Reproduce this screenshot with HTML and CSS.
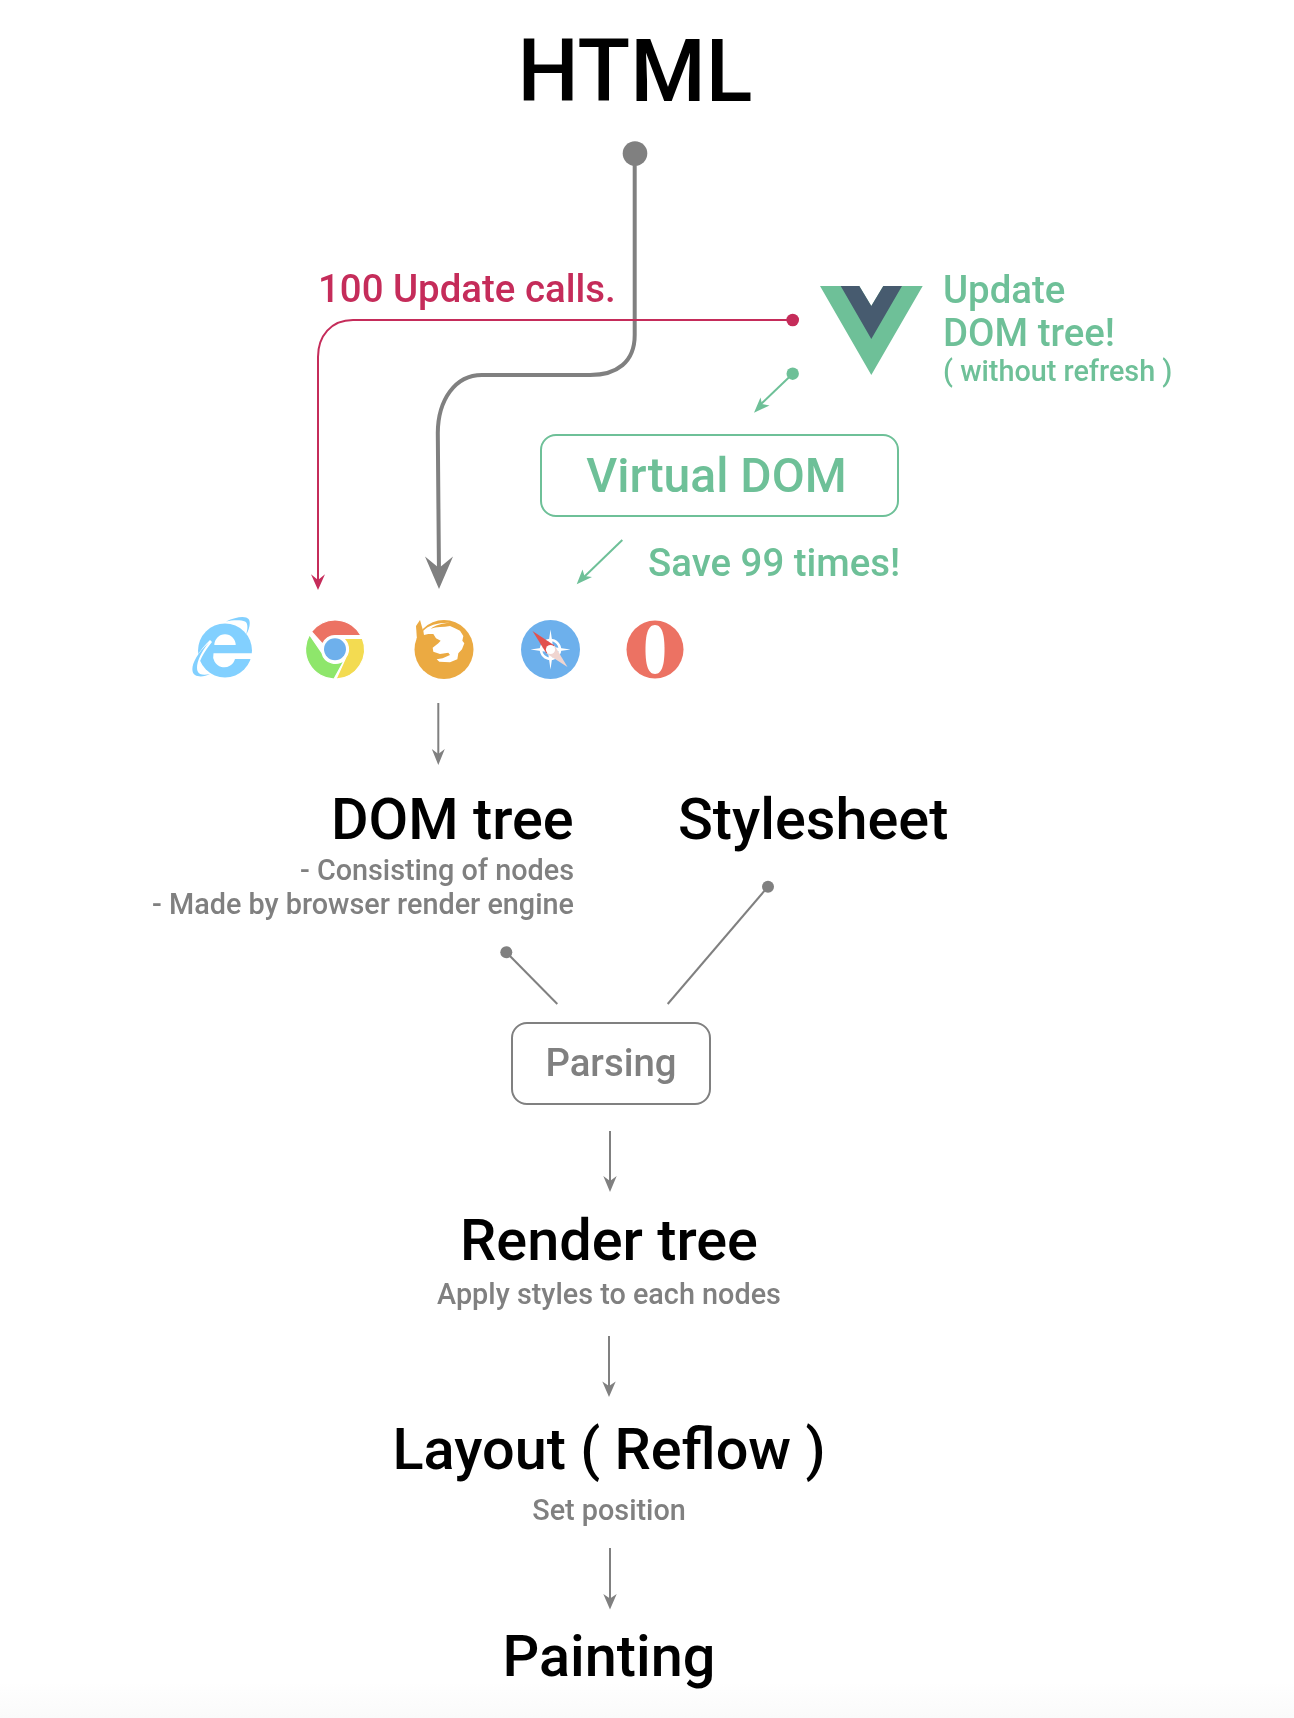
FILE: index.html
```html
<!DOCTYPE html>
<html>
<head>
  <title>Browser rendering flow</title>
  <meta charset="utf-8">
  <link rel="stylesheet" href="styles.css">
</head>
<body>
  <div class="canvas">
    <svg class="wires" width="1294" height="1718" viewBox="0 0 1294 1718">
      <!-- html to dom tree -->
      <g class="wire-gray">
        <circle cx="635" cy="153.5" r="12.3"/>
        <path class="w4" d="M634.7 153 V335 C634.7 362 617 375 590 375 H482 C455 375 438 400 437.8 433 L439 575"/>
        <path d="M439 589 L425 556.5 L439 568 L453 556.5 Z"/>
      </g>

      <!-- vue update calls -->
      <g class="wire-pink">
        <circle cx="792.7" cy="320" r="6.3"/>
        <path class="w2" d="M793 320 H353 C331 320 318 336 318 357 V580"/>
        <path d="M318 590 L311 574.3 L318 580 L325 574.3 Z"/>
      </g>

      <!-- vue to virtual dom -->
      <g class="wire-green">
        <circle cx="792.7" cy="373.7" r="6.2"/>
        <path class="w2" d="M792.7 373.7 L760 405"/>
        <path d="M754 412.7 L760.5 397.5 L762 404 L769.5 405.5 Z"/>
        <path class="w2" d="M622.3 540 L583 578"/>
        <path d="M576.7 584.3 L582.5 569.5 L584.5 576 L592 577 Z"/>
      </g>

      <!-- vue logo -->
      <path class="vue-light" d="M820 286 H859.3 L871.3 306 L883.3 286 H922.7 L871.3 375 Z"/>
      <path class="vue-dark" d="M840.7 286 H859.3 L871.3 306 L883.3 286 H902 L871.3 339 Z"/>

      <!-- browser icons -->
      <g class="browsers">
        <g class="ie">
          <circle cx="225" cy="650.5" r="27"/>
          <path class="cut" d="M214.3 645 A10.7 10.7 0 0 1 235.7 645 Z"/>
          <path class="cut" d="M213.5 653.3 H253 V659 H235 A10.6 10.6 0 0 1 213.5 653.3 Z"/>
          <path class="cut" d="M210 640 C195 654 189 670 195 676 L199 678 C195 668 202 654 212 642 Z"/>
          <path d="M209 642.5 C193 657 189 671 195 675 C199 677.5 205 676.5 210 674 C204 675.5 199 675 197.5 671 C195.5 665 200 653 209 642.5 Z"/>
          <path d="M226 621.5 C236 616.5 246 615.5 248.5 619 C251 622 249.5 629 246 635 C248 628 248 623 245 621.5 C241 619.5 232 620 226 621.5 Z"/>
        </g>
        <g class="chrome">
          <path class="red" d="M311.5 631.7 A29.5 29.5 0 0 1 361 635.5 H335.5 A13.5 13.5 0 0 0 322.5 644 Z"/>
          <path class="green" d="M309.5 634.7 A29.5 29.5 0 0 0 334 679 L345 659 A13.5 13.5 0 0 1 322 653 Z"/>
          <path class="yellow" d="M362.3 638.3 A29.5 29.5 0 0 1 336 679 L346 657 A13.5 13.5 0 0 0 343 638.3 Z"/>
          <circle class="blue" cx="335" cy="649.3" r="11"/>
        </g>
        <g class="firefox">
          <circle cx="444" cy="649.5" r="29.5"/>
          <path d="M416 626 L420 620 L424 634 L417 640 Z"/>
          <path class="cut" transform="translate(400 610) scale(.3333)" d="M70 62 C85 45 115 37 150 38 C125 40 105 46 92 56 C110 50 130 52 150 48 L165 55 L180 62 L190 78 L187 92 L193 100 L186 118 L175 130 L172 148 L150 157 L118 155 L110 148 L128 145 L150 135 L145 128 L120 132 L100 125 L98 113 L115 100 L122 92 L108 85 L100 72 L85 72 L72 75 Z"/>
        </g>
        <g class="safari" transform="translate(550.5 649.5)">
          <circle cx="0" cy="0" r="29.5"/>
          <circle class="ring" cx="0" cy="0" r="9.5"/>
          <path class="cut" d="M0 -20 L2.5 -2.5 L20 0 L2.5 2.5 L0 20 L-2.5 2.5 L-20 0 L-2.5 -2.5 Z"/>
          <path class="needle-red" d="M-18 -18.5 L4 -4 L-4 4 Z"/>
          <path class="needle-pale" d="M17 17.5 L4 -4 L-4 4 Z"/>
          <circle class="cut" cx="0" cy="0" r="4.6"/>
        </g>
        <g class="opera">
          <ellipse cx="655" cy="649.5" rx="28.5" ry="29"/>
          <path class="cut" d="M655 625 C647.5 625 645.5 636 645.5 649.5 C645.5 663 647.5 674 655 674 C662.5 674 664.5 663 664.5 649.5 C664.5 636 662.5 625 655 625 Z"/>
        </g>
      </g>

      <!-- down arrows and parsing inputs -->
      <g class="wire-gray">
        <path class="w2" d="M438.3 703 V755"/>
        <path d="M438.3 765 L431.8 749 L438.3 754 L444.8 749 Z"/>
        <circle cx="506.3" cy="952.3" r="6"/>
        <path class="w2" d="M506.3 952.3 L557.3 1004"/>
        <circle cx="768" cy="886.7" r="6"/>
        <path class="w2" d="M768 886.7 L667.7 1004"/>
        <path class="w2" d="M610 1131 V1182"/>
        <path d="M610 1192 L603.3 1176 L610 1181 L616.7 1176 Z"/>
        <path class="w2" d="M609 1336 V1387"/>
        <path d="M609 1397 L602.3 1381.5 L609 1386 L615.7 1381.5 Z"/>
        <path class="w2" d="M610 1548 V1599"/>
        <path d="M610 1609.5 L603.3 1594 L610 1598.5 L616.7 1594 Z"/>
      </g>
    </svg>

    <div class="node head-html">HTML</div>

    <div class="node calls">100 Update calls.</div>
    <div class="node update-one">Update</div>
    <div class="node update-two">DOM tree!</div>
    <div class="node update-note">( without refresh )</div>

    <div class="node box box-virtual">Virtual DOM</div>
    <div class="node save">Save 99 times!</div>

    <div class="node head dom-tree">DOM tree</div>
    <div class="node dom-notes">
      <div>- Consisting of nodes</div>
      <div>- Made by browser render engine</div>
    </div>
    <div class="node head stylesheet">Stylesheet</div>

    <div class="node box box-parsing">Parsing</div>

    <div class="node head col render-tree">Render tree</div>
    <div class="node note col render-note">Apply styles to each nodes</div>
    <div class="node head col layout">Layout ( Reflow )</div>
    <div class="node note col layout-note">Set position</div>
    <div class="node head col painting">Painting</div>

    <div class="foot"></div>
  </div>
</body>
</html>
```

FILE: styles.css
```css
html, body {
  margin: 0;
  padding: 0;
  background: #fff;
}

body {
  font-family: Roboto, 'Liberation Sans', sans-serif;
  font-weight: 500;
}

.canvas {
  position: relative;
  width: 1294px;
  height: 1718px;
  overflow: hidden;
}

.wires {
  position: absolute;
  top: 0;
  left: 0;
  display: block;
  z-index: 1;
}

.wire-gray { fill: #808080; }
.wire-pink { fill: #c52c5a; }
.wire-green { fill: #6ec098; }

.wires path.w4,
.wires path.w2 {
  fill: none;
}

.wire-gray .w4 { stroke: #808080; stroke-width: 4; }
.wire-gray .w2 { stroke: #808080; stroke-width: 2; }
.wire-pink .w2 { stroke: #c52c5a; stroke-width: 2; }
.wire-green .w2 { stroke: #6ec098; stroke-width: 2; }

.vue-light { fill: #6ec098; }
.vue-dark { fill: #475b6f; }

/* source icons are soft, not crisp */
.browsers { filter: blur(0.5px); }
.browsers .cut { fill: #fff; }

.ie { fill: #82d0ff; }

.chrome path { stroke: #fff; stroke-width: 1.2; }
.chrome .red { fill: #ec7263; }
.chrome .green { fill: #8ee66b; }
.chrome .yellow { fill: #f3db51; }
.chrome .blue { fill: #6eb0ec; }

.firefox { fill: #ebaa42; }

.safari { fill: #6db0ec; }
.safari .ring { fill: none; stroke: #fff; stroke-width: 2.5; }
.safari .needle-red { fill: #e2524f; }
.safari .needle-pale { fill: #f0d5d0; }

.opera { fill: #ec7263; }

.node {
  position: absolute;
  line-height: 1;
  white-space: nowrap;
  z-index: 2;
  /* own layer, keeps the text antialiasing grey like the source */
  will-change: transform;
}

.head-html {
  left: 435px;
  top: 29px;
  width: 400px;
  text-align: center;
  font-size: 86.4px;
  color: #000;
}

.calls {
  left: 318px;
  top: 270px;
  font-size: 38.4px;
  color: #c52c5a;
}

.update-one,
.update-two {
  left: 943px;
  font-size: 38.4px;
  color: #6ec098;
}

.update-one { top: 271px; }
.update-two { top: 314px; }

.update-note {
  left: 943px;
  top: 357px;
  font-size: 28.8px;
  color: #6ec098;
}

.box {
  display: flex;
  align-items: center;
  justify-content: center;
  box-sizing: border-box;
  border: 2px solid;
  border-radius: 16px;
}

.box-virtual {
  left: 540px;
  top: 434px;
  width: 359px;
  height: 83px;
  padding-right: 6px;
  font-size: 48px;
  color: #6ec098;
}

.save {
  left: 648px;
  top: 544px;
  font-size: 38.4px;
  color: #6ec098;
}

.head {
  font-size: 57.6px;
  color: #000;
}

.dom-tree {
  right: 720px;
  top: 791px;
}

.stylesheet {
  left: 678px;
  top: 791px;
}

.dom-notes {
  right: 720px;
  top: 853px;
  font-size: 28.8px;
  line-height: 34px;
  text-align: right;
  color: #808080;
}

.box-parsing {
  left: 511px;
  top: 1022px;
  width: 200px;
  height: 83px;
  font-size: 38.4px;
  color: #808080;
}

.col {
  left: 309px;
  width: 600px;
  text-align: center;
}

.note {
  font-size: 28.8px;
  color: #808080;
}

.render-tree { top: 1212px; }
.render-note { top: 1280px; }
.layout { top: 1421px; }
.layout-note { top: 1496px; }
.painting { top: 1628px; }

.foot {
  position: absolute;
  left: 0;
  right: 0;
  top: 1682px;
  bottom: 0;
  background: linear-gradient(#fff, #fafafa);
}
```
